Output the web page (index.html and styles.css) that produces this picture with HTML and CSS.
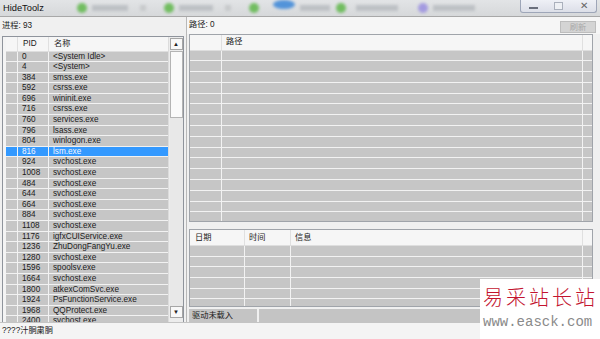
FILE: index.html
```html
<!DOCTYPE html>
<html lang="zh">
<head>
  <meta charset="UTF-8" />
  <title>HideToolz</title>
  <link rel="stylesheet" href="styles.css">
</head>
<body>
  <div class="titlebar">
    <div class="title">HideToolz</div>
    <div class="glass">
      <span class="dot green"></span><span class="bar w36"></span><span class="chev"></span>
      <span class="dot green"></span><span class="bar w34"></span><span class="chev"></span>
      <span class="dot green"></span><span class="dot blue"></span><span class="bar w30"></span>
      <span class="dot green"></span><span class="bar w40"></span>
      <span class="dot purple"></span><span class="bar w42"></span>
    </div>
    <div class="controls">
      <span class="ctl min"></span>
      <span class="ctl max"></span>
      <span class="ctl close">✕</span>
    </div>
  </div>

  <div class="main">
    <div class="left">
      <div class="caption">进程: 93</div>
      <div class="listbox">
        <div class="cols">
          <div class="row head"><span></span><span>PID</span><span>名称</span></div>
          <div class="row"><span></span><span>0</span><span>&lt;System Idle&gt;</span></div>
          <div class="row"><span></span><span>4</span><span>&lt;System&gt;</span></div>
          <div class="row"><span></span><span>384</span><span>smss.exe</span></div>
          <div class="row"><span></span><span>592</span><span>csrss.exe</span></div>
          <div class="row"><span></span><span>696</span><span>wininit.exe</span></div>
          <div class="row"><span></span><span>716</span><span>csrss.exe</span></div>
          <div class="row"><span></span><span>760</span><span>services.exe</span></div>
          <div class="row"><span></span><span>796</span><span>lsass.exe</span></div>
          <div class="row"><span></span><span>804</span><span>winlogon.exe</span></div>
          <div class="row selected"><span></span><span>816</span><span>lsm.exe</span></div>
          <div class="row"><span></span><span>924</span><span>svchost.exe</span></div>
          <div class="row"><span></span><span>1008</span><span>svchost.exe</span></div>
          <div class="row"><span></span><span>484</span><span>svchost.exe</span></div>
          <div class="row"><span></span><span>644</span><span>svchost.exe</span></div>
          <div class="row"><span></span><span>664</span><span>svchost.exe</span></div>
          <div class="row"><span></span><span>884</span><span>svchost.exe</span></div>
          <div class="row"><span></span><span>1108</span><span>svchost.exe</span></div>
          <div class="row"><span></span><span>1176</span><span>igfxCUIService.exe</span></div>
          <div class="row"><span></span><span>1236</span><span>ZhuDongFangYu.exe</span></div>
          <div class="row"><span></span><span>1280</span><span>svchost.exe</span></div>
          <div class="row"><span></span><span>1596</span><span>spoolsv.exe</span></div>
          <div class="row"><span></span><span>1664</span><span>svchost.exe</span></div>
          <div class="row"><span></span><span>1800</span><span>atkexComSvc.exe</span></div>
          <div class="row"><span></span><span>1924</span><span>PsFunctionService.exe</span></div>
          <div class="row"><span></span><span>1968</span><span>QQProtect.exe</span></div>
          <div class="row"><span></span><span>2400</span><span>svchost.exe</span></div>
        </div>
        <div class="scrollbar">
          <div class="arrow">▲</div>
          <div class="thumb"></div>
          <div class="track"></div>
          <div class="arrow">▼</div>
        </div>
      </div>
    </div>

    <div class="right">
      <div class="caption path-caption">
        <span>路径: 0</span>
        <span class="btn">刷新</span>
      </div>
      <div class="grid path-list">
        <div class="prow head"><span></span><span>路径</span><span></span></div>
        <div class="prow"><span></span><span></span><span></span></div>
        <div class="prow"><span></span><span></span><span></span></div>
        <div class="prow"><span></span><span></span><span></span></div>
        <div class="prow"><span></span><span></span><span></span></div>
        <div class="prow"><span></span><span></span><span></span></div>
        <div class="prow"><span></span><span></span><span></span></div>
        <div class="prow"><span></span><span></span><span></span></div>
        <div class="prow"><span></span><span></span><span></span></div>
        <div class="prow"><span></span><span></span><span></span></div>
        <div class="prow"><span></span><span></span><span></span></div>
        <div class="prow"><span></span><span></span><span></span></div>
        <div class="prow"><span></span><span></span><span></span></div>
        <div class="prow"><span></span><span></span><span></span></div>
        <div class="prow"><span></span><span></span><span></span></div>
        <div class="prow"><span></span><span></span><span></span></div>
        <div class="prow"><span></span><span></span><span></span></div>
      </div>
      <div class="grid log-list">
        <div class="lrow head"><span>日期</span><span>时间</span><span>信息</span><span></span></div>
        <div class="lrow"><span></span><span></span><span></span><span></span></div>
        <div class="lrow"><span></span><span></span><span></span><span></span></div>
        <div class="lrow"><span></span><span></span><span></span><span></span></div>
        <div class="lrow"><span></span><span></span><span></span><span></span></div>
        <div class="lrow"><span></span><span></span><span></span><span></span></div>
        <div class="lrow"><span></span><span></span><span></span><span></span></div>
      </div>
      <div class="driver">
        <span class="driver-text">驱动未载入</span>
        <span class="driver-rest"></span>
      </div>
    </div>
  </div>

  <div class="status">????汁胴粛胴</div>

  <div class="watermark">
    <div class="wm-name">易采站长站</div>
    <div class="wm-url">www.easck.com</div>
  </div>
</body>
</html>
```

FILE: styles.css
```css
* {
  box-sizing: border-box;
}

body {
  margin: 0;
  width: 600px;
  height: 339px;
  overflow: hidden;
  position: relative;
  font-family: "Liberation Sans", "Noto Sans CJK SC", sans-serif;
  font-size: 8.2px;
  color: #1a1a1a;
  background: #f0f0f0;
}

/* title bar */
.titlebar {
  height: 17px;
  display: flex;
  align-items: flex-start;
  background: linear-gradient(#e2e4e6, #d6d8da);
  border-bottom: 1px solid #a8a8a8;
  padding-left: 3px;
}

.title {
  font-size: 9.3px;
  line-height: 16px;
  width: 68px;
  color: #111;
}

.glass {
  flex: 1;
  display: flex;
  align-items: center;
  height: 16px;
  filter: blur(1.6px);
  opacity: 0.85;
}

.dot {
  width: 10px;
  height: 10px;
  border-radius: 50%;
  margin-left: 6px;
}

.green { background: #5fb84a; }
.blue { background: #3a86d8; margin-left: 14px; width: 22px; height: 9px; align-self: flex-start; }
.purple { background: #9a8fe0; margin-left: 20px; }

.bar {
  height: 6px;
  background: #b8bcc0;
  margin-left: 5px;
}

.w30 { width: 30px; }
.w34 { width: 34px; }
.w36 { width: 36px; }
.w40 { width: 42px; margin-left: 10px; }
.w42 { width: 42px; }

.chev {
  width: 6px;
  height: 6px;
  background: #c4c6c8;
  margin: 0 12px 0 12px;
}

.controls {
  display: flex;
  justify-content: space-around;
  align-items: center;
  width: 77px;
  height: 13px;
  margin-right: 3px;
  background: linear-gradient(#eef0f6, #dcdfe8);
  border: 1px solid #9ea6b8;
  border-top: none;
  border-radius: 0 0 3px 3px;
}

.ctl {
  width: 9px;
  height: 8px;
  color: #555;
}

.min {
  border-bottom: 2px solid #6a6f7c;
  height: 6px;
}

.max {
  border: 1px solid #aab0bc;
  background: #eef0f4;
}

.close {
  font-size: 10px;
  line-height: 8px;
  text-align: center;
  color: #666;
}

/* layout */
.main {
  display: flex;
  height: 305px;
}

.left {
  width: 186px;
  display: flex;
  flex-direction: column;
  padding: 0 2px;
}

.caption {
  height: 19px;
  line-height: 17px;
  padding-left: 0;
}

.listbox {
  flex: 1;
  display: flex;
  overflow: hidden;
  background: #f4f4f4;
  border: 1px solid #8f949c;
  border-bottom: none;
}

.cols {
  flex: 1;
  overflow: hidden;
  padding-left: 3px;
}

.row {
  display: grid;
  grid-template-columns: 11px 31px 1fr;
  height: 10.6px;
  line-height: 10px;
  background: #c6c6c6;
  border-bottom: 1px solid #f2f2f2;
  white-space: nowrap;
}

.row span + span {
  border-left: 1px solid #f2f2f2;
  padding-left: 4px;
}

.row.head {
  height: 14.5px;
  line-height: 14px;
  background: #f6f6f6;
  border-bottom: 1px solid #dedede;
}

.row.head span + span {
  border-left: 1px solid #e0e0e0;
  padding-left: 5px;
}

.row.selected {
  background: #3399ff;
  color: #f4f8ff;
}

.scrollbar {
  width: 15px;
  display: flex;
  flex-direction: column;
  align-items: center;
  background: #ececec;
  border-left: 1px solid #dcdcdc;
  padding: 1px 0 4px;
}

.arrow {
  width: 13px;
  height: 12px;
  font-size: 6px;
  line-height: 11px;
  text-align: center;
  color: #222;
  background: #f8f8f8;
  border: 1px solid #a6a6a6;
}

.thumb {
  width: 13px;
  height: 67px;
  margin-top: 1px;
  background: #fafafa;
  border: 1px solid #b4b4b4;
}

.track {
  flex: 1;
  width: 13px;
  background: #e8e8e8;
}

.right {
  flex: 1;
  display: flex;
  flex-direction: column;
  padding: 0 7px 0 2px;
  border-left: 1px solid #b8b8b8;
}

.path-caption {
  height: 17px;
  line-height: 16px;
  display: flex;
  justify-content: space-between;
  align-items: flex-start;
  background: #f6f6f6;
  margin-left: -2px;
  margin-right: -7px;
  padding: 0 4px 0 2px;
}

.btn {
  margin-top: 4px;
  width: 36px;
  height: 12px;
  line-height: 11px;
  text-align: center;
  background: #d4d4d4;
  border: 1px solid #bdbdbd;
  color: #a8a8a8;
}

.grid {
  border: 1px solid #a0a4aa;
  background: #c6c6c6;
  overflow: hidden;
}

.path-list {
  height: 188px;
}

.prow {
  display: grid;
  grid-template-columns: 31px 1fr 10px;
  height: 10.8px;
  border-bottom: 1px solid #f2f2f2;
}

.lrow {
  display: grid;
  grid-template-columns: 54px 46px 1fr 10px;
  height: 10.7px;
  border-bottom: 1px solid #f2f2f2;
}

.prow span + span,
.lrow span + span {
  border-left: 1px solid #f2f2f2;
}

.prow.head,
.lrow.head {
  background: #f6f6f6;
  border-bottom: 1px solid #dedede;
  line-height: 14px;
}

.prow.head {
  height: 15.5px;
}

.lrow.head {
  height: 16px;
  line-height: 15px;
}

.prow.head span + span,
.lrow.head span + span {
  border-left: 1px solid #e0e0e0;
  padding-left: 4px;
}

.lrow.head span:first-child {
  padding-left: 5px;
}

.log-list {
  height: 78px;
  margin-top: 7px;
}

.driver {
  display: flex;
  height: 13px;
  margin-top: 2px;
  margin-right: -7px;
  gap: 2px;
}

.driver-text {
  width: 68px;
  line-height: 13px;
  padding-left: 3px;
  background: #c4c4c4;
}

.driver-rest {
  flex: 1;
  background: #c4c4c4;
}

.status {
  height: 17px;
  line-height: 16px;
  padding-left: 2px;
  background: #f4f4f4;
  border-top: 1px solid #c4c4c4;
}

/* watermark overlay */
.watermark {
  position: absolute;
  left: 480px;
  top: 279px;
  width: 120px;
  height: 60px;
  background: #fff;
  padding: 6px 0 0 3px;
}

.wm-name {
  font-family: "Noto Sans CJK SC", sans-serif;
  font-weight: 300;
  font-size: 20px;
  line-height: 24px;
  letter-spacing: 3px;
  color: #c3142f;
}

.wm-url {
  font-family: "Liberation Mono", monospace;
  font-size: 14px;
  line-height: 18px;
  margin-top: 4px;
  color: #8a8a8a;
}
```
